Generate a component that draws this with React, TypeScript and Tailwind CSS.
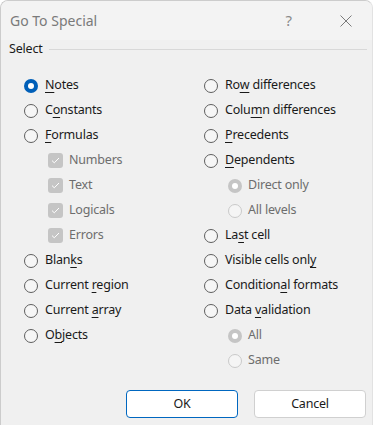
import { ReactNode } from "react";

type Opt = {
  label: ReactNode;
  kind?: "radio" | "check";
  checked?: boolean;
  disabled?: boolean;
  sub?: boolean;
};

// underline the access key letter at index i
function key(text: string, i: number) {
  return (
    <>
      {text.slice(0, i)}
      <span className="underline decoration-1 underline-offset-[3px]">{text[i]}</span>
      {text.slice(i + 1)}
    </>
  );
}

const leftCol: Opt[] = [
  { label: key("Notes", 0), checked: true },
  { label: key("Constants", 1) },
  { label: key("Formulas", 0) },
  { label: "Numbers", kind: "check", checked: true, disabled: true, sub: true },
  { label: "Text", kind: "check", checked: true, disabled: true, sub: true },
  { label: "Logicals", kind: "check", checked: true, disabled: true, sub: true },
  { label: "Errors", kind: "check", checked: true, disabled: true, sub: true },
  { label: key("Blanks", 4) },
  { label: key("Current region", 8) },
  { label: key("Current array", 8) },
  { label: key("Objects", 1) },
];

const rightCol: Opt[] = [
  { label: key("Row differences", 2) },
  { label: key("Column differences", 4) },
  { label: key("Precedents", 0) },
  { label: key("Dependents", 0) },
  { label: "Direct only", checked: true, disabled: true, sub: true },
  { label: "All levels", disabled: true, sub: true },
  { label: key("Last cell", 2) },
  { label: key("Visible cells only", 17) },
  { label: key("Conditional formats", 9) },
  { label: key("Data validation", 5) },
  { label: "All", checked: true, disabled: true, sub: true },
  { label: "Same", disabled: true, sub: true },
];

function Radio({ checked, disabled }: { checked?: boolean; disabled?: boolean }) {
  if (checked) {
    return (
      <span
        className={`flex h-[14px] w-[14px] shrink-0 items-center justify-center rounded-full ${
          disabled ? "bg-[#c5c5c5]" : "bg-[#005fb8]"
        }`}
      >
        <span className="h-[6px] w-[6px] rounded-full bg-white" />
      </span>
    );
  }
  return (
    <span
      className={`h-[14px] w-[14px] shrink-0 rounded-full border ${
        disabled ? "border-[#cacaca] bg-[#f5f5f5]" : "border-[#5f5f5f] bg-[#f6f6f6]"
      }`}
    />
  );
}

function Check() {
  return (
    <span className="flex h-[15px] w-[15px] shrink-0 items-center justify-center rounded-[3px] bg-[#c5c5c5]">
      <svg width="9" height="7" viewBox="0 0 9 7" fill="none">
        <path d="M1 3.6L3.3 5.8L8 1" stroke="white" strokeWidth="1" />
      </svg>
    </span>
  );
}

function Row({ opt }: { opt: Opt }) {
  return (
    <div className={`flex h-[25px] items-center ${opt.sub ? "gap-[6px] pl-[24px]" : "gap-[7px]"}`}>
      {opt.kind === "check" ? <Check /> : <Radio checked={opt.checked} disabled={opt.disabled} />}
      <span className={opt.disabled ? "text-[#6d6d6d]" : "text-[#1a1a1a]"}>{opt.label}</span>
    </div>
  );
}

export default function App() {
  return (
    <div
      className="flex h-[425px] w-[373px] flex-col overflow-hidden rounded-t-lg border border-b-0 border-[#cccccc] border-r-[#e2e2e2] bg-[#f0f0f0] text-[12.5px] tracking-[-0.2px]"
      style={{ fontFamily: '"Noto Sans", "Open Sans", sans-serif' }}
    >
      <div className="flex h-[39px] shrink-0 items-center bg-[#f3f3f3] pl-[9px] tracking-normal">
        <span className="text-[14px] text-[#7a7a7a]">Go To Special</span>
        <span className="ml-auto text-[15px] text-[#8a8a8a]">?</span>
        <span className="ml-[48px] mr-[20px] flex">
          <svg width="12" height="12" viewBox="0 0 12 12" fill="none">
            <path d="M0.5 0.5L11.5 11.5M11.5 0.5L0.5 11.5" stroke="#7a7a7a" strokeWidth="1" />
          </svg>
        </span>
      </div>

      <div className="flex h-[18px] items-center pl-[8px] pr-[5px] pt-[1px]">
        <span className="text-[#1a1a1a]">Select</span>
        <span className="ml-[6px] h-px flex-1 bg-[#d8d8d8]" />
      </div>

      <div className="flex pl-[23px] pt-[15px]">
        <div className="w-[180px]">
          {leftCol.map((o, i) => (
            <Row key={i} opt={o} />
          ))}
        </div>
        <div>
          {rightCol.map((o, i) => (
            <Row key={i} opt={o} />
          ))}
        </div>
      </div>

      <div className="mt-[17px] flex justify-end gap-[16px] pr-[6px]">
        <button
          type="button"
          className="h-[28px] w-[112px] rounded-[4px] border-[1.5px] border-[#0067c0] bg-white text-[#1a1a1a]"
        >
          OK
        </button>
        <button
          type="button"
          className="h-[28px] w-[112px] rounded-[4px] border border-[#d0d0d0] bg-white text-[#1a1a1a]"
        >
          Cancel
        </button>
      </div>
    </div>
  );
}
